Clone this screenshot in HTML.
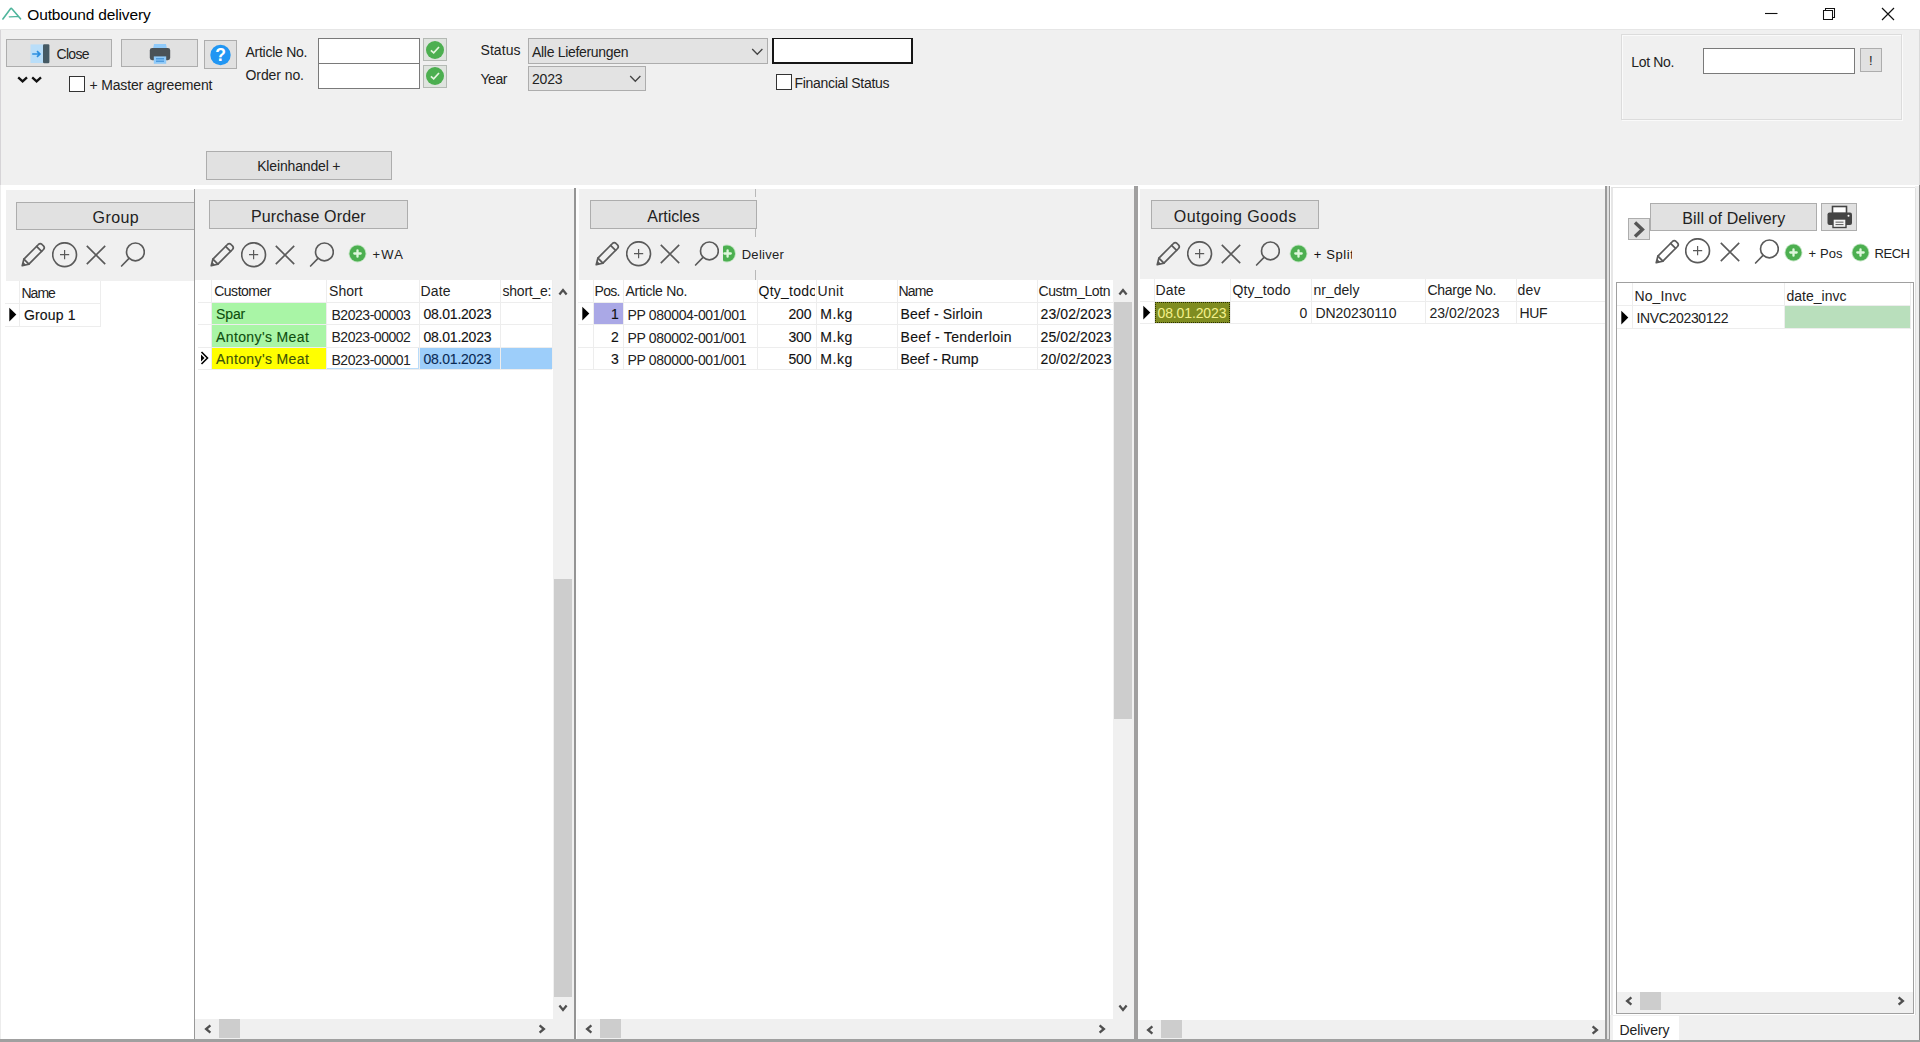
<!DOCTYPE html><html lang="en"><head><meta charset="utf-8"><title>Outbound delivery</title><style>
html,body{margin:0;padding:0;}
body{width:1920px;height:1042px;overflow:hidden;background:#f0f0f0;font-family:"Liberation Sans", sans-serif;position:relative;}
.w{position:absolute;left:0;top:0;width:1920px;height:1042px;overflow:hidden;}
.w div,.w svg,.w span{position:absolute;}
.w span{white-space:pre;line-height:20px;height:20px;}

</style></head><body><div class="w">
<div style="left:0px;top:0px;width:1920px;height:30px;background:#ffffff;"></div>
<div style="left:0px;top:29px;width:1920px;height:1px;background:#e6e6e6;"></div>
<svg style="left:2px;top:6px" width="21" height="16" viewBox="0 0 21 16"><path d="M0.9 13 L8.3 3 Q9.2 1.8 10.1 3 L18.5 12.8" fill="none" stroke="#4fb59c" stroke-width="1.6" stroke-linecap="round" stroke-linejoin="round"/><path d="M7.3 10.9 Q8.5 10.5 15.8 10.6" fill="none" stroke="#4fb59c" stroke-width="1.3" stroke-linecap="round"/></svg>
<svg style="left:1760px;top:4px" width="24" height="20" viewBox="0 0 24 20"><path d="M5 9.5 H17.5" stroke="#111" stroke-width="1.1"/></svg>
<svg style="left:1818px;top:4px" width="24" height="20" viewBox="0 0 24 20"><path d="M5.5 6.5 H14.5 V15.5 H5.5 Z M7.5 6.5 V4.5 H16.5 V13.5 H14.5" fill="none" stroke="#111" stroke-width="1.05"/></svg>
<svg style="left:1876px;top:4px" width="24" height="20" viewBox="0 0 24 20"><path d="M6 4 L18 16 M18 4 L6 16" stroke="#111" stroke-width="1.2"/></svg>
<div style="left:6px;top:39px;width:106px;height:28px;background:#e1e1e1;border:1px solid #adadad;box-sizing:border-box;"></div>
<svg style="left:29px;top:43px" width="24" height="22" viewBox="0 0 24 22"><rect x="1.5" y="1.4" width="13" height="18.6" fill="#b9def9"/><path d="M3.2 11 H10.6 M8 8.2 L10.9 11 L8 13.8" fill="none" stroke="#2b8fe0" stroke-width="1.7"/><rect x="14" y="1.2" width="6.4" height="19" rx="1.2" fill="#455a64"/></svg>
<div style="left:121px;top:39px;width:77px;height:28px;background:#e1e1e1;border:1px solid #adadad;box-sizing:border-box;"></div>
<svg style="left:148px;top:42px" width="24" height="24" viewBox="0 0 24 24"><path d="M6 2 H18 L19 7 H5 Z" fill="#90caf9"/><rect x="1.8" y="6" width="20.4" height="12.2" rx="2.4" fill="#4a5257"/><rect x="5.8" y="14.4" width="12.4" height="7.4" fill="#90caf9"/><rect x="8" y="16.2" width="8" height="1.2" fill="#3f8fd6"/><rect x="8" y="18.6" width="8" height="1.2" fill="#3f8fd6"/></svg>
<div style="left:204px;top:40px;width:33px;height:29px;background:#e1e1e1;border:1px solid #adadad;box-sizing:border-box;"></div>
<svg style="left:209.6px;top:44.1px" width="22" height="22" viewBox="0 0 22 22"><circle cx="10.5" cy="11" r="10.2" fill="#2196f3"/><text x="10.5" y="17" font-size="17.5" font-weight="bold" fill="#fff" text-anchor="middle" font-family="Liberation Sans, sans-serif">?</text></svg>
<svg style="left:16px;top:75px" width="28" height="10" viewBox="0 0 28 10"><path d="M2.2 2.4 L6.6 6.4 L11 2.4 M16.2 2.4 L20.6 6.4 L25 2.4" fill="none" stroke="#111" stroke-width="2.3" stroke-linejoin="miter"/></svg>
<div style="left:69px;top:76px;width:16px;height:16px;background:#fff;border:1px solid #333;box-sizing:border-box;"></div>
<div style="left:318px;top:38px;width:102px;height:26px;background:#fff;border:1px solid #7a7a7a;box-sizing:border-box;"></div>
<div style="left:318px;top:63px;width:102px;height:26px;background:#fff;border:1px solid #7a7a7a;box-sizing:border-box;"></div>
<div style="left:423px;top:38px;width:24px;height:23px;background:#dfe4df;border:1px solid #b4b9b4;box-sizing:border-box;"></div>
<svg style="left:425.0px;top:39.5px" width="20" height="20" viewBox="0 0 20 20"><circle cx="10" cy="10" r="9" fill="#4caf50"/><path d="M5.9 10.3 L8.7 12.9 L14 7" fill="none" stroke="#e4f5de" stroke-width="1.7"/></svg>
<div style="left:423px;top:64.5px;width:24px;height:23.0px;background:#dfe4df;border:1px solid #b4b9b4;box-sizing:border-box;"></div>
<svg style="left:425.0px;top:66.0px" width="20" height="20" viewBox="0 0 20 20"><circle cx="10" cy="10" r="9" fill="#4caf50"/><path d="M5.9 10.3 L8.7 12.9 L14 7" fill="none" stroke="#e4f5de" stroke-width="1.7"/></svg>
<div style="left:528px;top:38px;width:240px;height:26px;background:#e3e3e3;border:1px solid #adadad;box-sizing:border-box;"></div>
<svg style="left:750px;top:46px" width="16" height="12" viewBox="0 0 16 12"><path d="M2.2 3 L7.3 8.2 L12.4 3" fill="none" stroke="#444" stroke-width="1.3"/></svg>
<div style="left:528px;top:66px;width:118px;height:25px;background:#e3e3e3;border:1px solid #adadad;box-sizing:border-box;"></div>
<svg style="left:628px;top:73px" width="16" height="12" viewBox="0 0 16 12"><path d="M2.2 3 L7.3 8.2 L12.4 3" fill="none" stroke="#444" stroke-width="1.3"/></svg>
<div style="left:772.4px;top:37.8px;width:140.39999999999998px;height:26.0px;background:#161616;"></div>
<div style="left:774px;top:39.4px;width:137.20000000000005px;height:22.800000000000004px;background:#fff;"></div>
<div style="left:776px;top:74px;width:16px;height:16px;background:#fff;border:1px solid #333;box-sizing:border-box;"></div>
<div style="left:1621px;top:34px;width:281px;height:86px;border:1px solid #dcdcdc;box-sizing:border-box;box-shadow:1px 1px 0 #fafafa, inset 1px 1px 0 #fafafa;"></div>
<div style="left:1703px;top:48px;width:152px;height:26px;background:#fff;border:1px solid #7a7a7a;box-sizing:border-box;"></div>
<div style="left:1860px;top:48px;width:22px;height:23.599999999999994px;background:#e1e1e1;border:1px solid #adadad;box-sizing:border-box;"></div>
<div style="left:206px;top:151px;width:186px;height:29px;background:#e1e1e1;border:1px solid #adadad;box-sizing:border-box;"></div>
<div style="left:0px;top:185px;width:1920px;height:857px;background:#ffffff;"></div>
<div style="left:0px;top:185px;width:1px;height:857px;background:#ececec;"></div>
<div style="left:0px;top:30px;width:1px;height:155px;background:#d6d4d7;"></div>
<div style="left:1919px;top:30px;width:1px;height:155px;background:#dadada;"></div>
<div style="left:5.8px;top:190.3px;width:188.2px;height:90.69999999999999px;background:#f0f0f0;"></div>
<div style="left:16px;top:202px;width:178px;height:28px;background:#e1e1e1;border:1px solid #adadad;box-sizing:border-box;border-right:none;"></div>
<svg style="left:21px;top:242px" width="25" height="25" viewBox="0 0 25 25"><g transform="scale(1.04)"><g fill="none" stroke="#5a5a5a" stroke-width="1.65" stroke-linejoin="round" stroke-linecap="round"><path d="M1.2 22.8 L2.8 16.4 L16.8 2.4 Q18.5 0.8 20.2 2.4 L21.6 3.8 Q23.2 5.5 21.6 7.2 L7.6 21.2 Z"/><path d="M2.8 16.4 L7.6 21.2"/><path d="M15 4.2 L19.8 9"/></g><path d="M1.2 22.8 L2.1 19.2 L4.8 21.9 Z" fill="#5a5a5a"/></g></svg>
<svg style="left:51.5px;top:241.5px" width="26" height="26" viewBox="0 0 26 26"><g fill="none" stroke="#5a5a5a" stroke-width="1.65"><circle cx="12.6" cy="12.7" r="11.9"/><path d="M12.6 8.1 V17.3 M8 12.7 H17.2" stroke-width="1.2"/></g></svg>
<svg style="left:86px;top:245px" width="20" height="20" viewBox="0 0 20 20"><path d="M0.8 0.8 L19.2 19.2 M19.2 0.8 L0.8 19.2" stroke="#5a5a5a" stroke-width="1.65"/></svg>
<svg style="left:120px;top:242px" width="25" height="25" viewBox="0 0 25 25"><g fill="none" stroke="#5a5a5a" stroke-width="1.65" stroke-linecap="round"><circle cx="15.4" cy="9.9" r="8.9"/><path d="M9 16.4 L1.6 24"/></g></svg>
<div style="left:5px;top:303px;width:96px;height:1px;background:#ededed;"></div>
<div style="left:5px;top:326px;width:96px;height:1px;background:#ededed;"></div>
<div style="left:19.3px;top:281px;width:1.0px;height:45px;background:#ededed;"></div>
<div style="left:100px;top:281px;width:1px;height:45px;background:#ededed;"></div>
<svg style="left:8.7px;top:307.2px" width="10" height="16" viewBox="0 0 10 16"><path d="M0.3 0.8 L7.3 7.6 L0.3 14.4 Z" fill="#000"/></svg>
<div style="left:193.8px;top:188.7px;width:1.299999999999983px;height:850.3px;background:#989898;"></div>
<div style="left:195px;top:189.3px;width:379px;height:90.69999999999999px;background:#f0f0f0;"></div>
<div style="left:209px;top:200px;width:199px;height:29px;background:#e1e1e1;border:1px solid #adadad;box-sizing:border-box;"></div>
<svg style="left:210px;top:242px" width="25" height="25" viewBox="0 0 25 25"><g transform="scale(1.04)"><g fill="none" stroke="#5a5a5a" stroke-width="1.65" stroke-linejoin="round" stroke-linecap="round"><path d="M1.2 22.8 L2.8 16.4 L16.8 2.4 Q18.5 0.8 20.2 2.4 L21.6 3.8 Q23.2 5.5 21.6 7.2 L7.6 21.2 Z"/><path d="M2.8 16.4 L7.6 21.2"/><path d="M15 4.2 L19.8 9"/></g><path d="M1.2 22.8 L2.1 19.2 L4.8 21.9 Z" fill="#5a5a5a"/></g></svg>
<svg style="left:240.5px;top:241.5px" width="26" height="26" viewBox="0 0 26 26"><g fill="none" stroke="#5a5a5a" stroke-width="1.65"><circle cx="12.6" cy="12.7" r="11.9"/><path d="M12.6 8.1 V17.3 M8 12.7 H17.2" stroke-width="1.2"/></g></svg>
<svg style="left:275px;top:245px" width="20" height="20" viewBox="0 0 20 20"><path d="M0.8 0.8 L19.2 19.2 M19.2 0.8 L0.8 19.2" stroke="#5a5a5a" stroke-width="1.65"/></svg>
<svg style="left:309px;top:242px" width="25" height="25" viewBox="0 0 25 25"><g fill="none" stroke="#5a5a5a" stroke-width="1.65" stroke-linecap="round"><circle cx="15.4" cy="9.9" r="8.9"/><path d="M9 16.4 L1.6 24"/></g></svg>
<svg style="left:347.6px;top:244.3px" width="19" height="19" viewBox="0 0 19 19"><circle cx="9.5" cy="9.5" r="8.9" fill="#bfe3c0"/><circle cx="9.5" cy="9.5" r="8" fill="#4caf50"/><path d="M9.5 6.3 V12.7 M6.3 9.5 H12.7" stroke="#dff7dc" stroke-width="2.3" stroke-linecap="round"/></svg>
<div style="left:211px;top:302px;width:115px;height:22px;background:#a9f5a6;"></div>
<div style="left:211px;top:324px;width:115px;height:23px;background:#a9f5a6;"></div>
<div style="left:211px;top:347px;width:115px;height:22px;background:#ffff00;"></div>
<div style="left:419px;top:347px;width:133px;height:22px;background:#9dcefa;"></div>
<div style="left:326px;top:347px;width:93px;height:22px;border:1px solid #b9dcfa;box-sizing:border-box;"></div>
<div style="left:198px;top:302px;width:354px;height:1px;background:#ededed;"></div>
<div style="left:198px;top:324px;width:354px;height:1px;background:#ededed;"></div>
<div style="left:198px;top:347px;width:354px;height:1px;background:#ededed;"></div>
<div style="left:198px;top:369px;width:354px;height:1px;background:#ededed;"></div>
<div style="left:211px;top:280px;width:1px;height:89px;background:#ededed;"></div>
<div style="left:326px;top:280px;width:1px;height:89px;background:#ededed;"></div>
<div style="left:419px;top:280px;width:1px;height:89px;background:#ededed;"></div>
<div style="left:500px;top:280px;width:1px;height:89px;background:#ededed;"></div>
<div style="left:552px;top:280px;width:1px;height:89px;background:#ededed;"></div>
<svg style="left:199px;top:350px" width="12" height="16" viewBox="0 0 12 16"><path d="M2.5 2 L8.5 8 L2.5 14" fill="none" stroke="#000" stroke-width="1.6"/><path d="M2 4.5 L5.5 8 L2 11.5 Z" fill="#000"/></svg>
<div style="left:553px;top:280px;width:20.5px;height:759px;background:#f0f0f0;"></div>
<div style="left:554px;top:579px;width:18px;height:418px;background:#cdcdcd;"></div>
<svg style="left:555px;top:283.5px" width="16" height="16" viewBox="-8 -8 16 16"><path d="M-3.6 2.4 L0 -1.9 L3.6 2.4" fill="none" stroke="#505050" stroke-width="2.3"/></svg>
<svg style="left:555px;top:999.5px" width="16" height="16" viewBox="-8 -8 16 16"><path d="M-3.6 -2.4 L0 1.9 L3.6 -2.4" fill="none" stroke="#505050" stroke-width="2.3"/></svg>
<div style="left:195px;top:1019px;width:358px;height:20px;background:#f0f0f0;"></div>
<div style="left:218.8px;top:1019.2px;width:21.19999999999999px;height:18.799999999999955px;background:#cdcdcd;"></div>
<svg style="left:199.5px;top:1020.5999999999999px" width="16" height="16" viewBox="-8 -8 16 16"><path d="M2.4 -3.6 L-1.9 0 L2.4 3.6" fill="none" stroke="#505050" stroke-width="2.3"/></svg>
<svg style="left:534px;top:1020.5999999999999px" width="16" height="16" viewBox="-8 -8 16 16"><path d="M-2.4 -3.6 L1.9 0 L-2.4 3.6" fill="none" stroke="#505050" stroke-width="2.3"/></svg>
<div style="left:576px;top:187.5px;width:3.2999999999999545px;height:851.5px;background:#fdfdfd;"></div>
<div style="left:573.5px;top:187.5px;width:2.5px;height:851.5px;background:#949494;"></div>
<div style="left:579.3px;top:188.8px;width:554.7px;height:91.19999999999999px;background:#f0f0f0;"></div>
<div style="left:590px;top:200px;width:167px;height:29px;background:#e1e1e1;border:1px solid #adadad;box-sizing:border-box;"></div>
<div style="left:755px;top:189px;width:1px;height:8px;background:#b8b8b8;"></div>
<div style="left:755px;top:229px;width:1px;height:8px;background:#b8b8b8;"></div>
<div style="left:755px;top:270px;width:1px;height:10px;background:#b8b8b8;"></div>
<svg style="left:595.2px;top:241px" width="25" height="25" viewBox="0 0 25 25"><g transform="scale(1.04)"><g fill="none" stroke="#5a5a5a" stroke-width="1.65" stroke-linejoin="round" stroke-linecap="round"><path d="M1.2 22.8 L2.8 16.4 L16.8 2.4 Q18.5 0.8 20.2 2.4 L21.6 3.8 Q23.2 5.5 21.6 7.2 L7.6 21.2 Z"/><path d="M2.8 16.4 L7.6 21.2"/><path d="M15 4.2 L19.8 9"/></g><path d="M1.2 22.8 L2.1 19.2 L4.8 21.9 Z" fill="#5a5a5a"/></g></svg>
<svg style="left:625.7px;top:240.5px" width="26" height="26" viewBox="0 0 26 26"><g fill="none" stroke="#5a5a5a" stroke-width="1.65"><circle cx="12.6" cy="12.7" r="11.9"/><path d="M12.6 8.1 V17.3 M8 12.7 H17.2" stroke-width="1.2"/></g></svg>
<svg style="left:660.2px;top:244px" width="20" height="20" viewBox="0 0 20 20"><path d="M0.8 0.8 L19.2 19.2 M19.2 0.8 L0.8 19.2" stroke="#5a5a5a" stroke-width="1.65"/></svg>
<svg style="left:694.2px;top:241px" width="25" height="25" viewBox="0 0 25 25"><g fill="none" stroke="#5a5a5a" stroke-width="1.65" stroke-linecap="round"><circle cx="15.4" cy="9.9" r="8.9"/><path d="M9 16.4 L1.6 24"/></g></svg>
<svg style="left:722.5px;top:244px" width="14" height="19" viewBox="0 0 14 19"><circle cx="4" cy="9.5" r="8.9" fill="#bfe3c0"/><circle cx="4" cy="9.5" r="8" fill="#4caf50"/><path d="M4.6 6.3 V12.7 M1.4 9.5 H7.8" stroke="#dff7dc" stroke-width="2.3" stroke-linecap="round"/></svg>
<div style="left:593px;top:302px;width:30px;height:22px;background:#aaa8e6;"></div>
<div style="left:578px;top:302px;width:535px;height:1px;background:#ededed;"></div>
<div style="left:578px;top:324px;width:535px;height:1px;background:#ededed;"></div>
<div style="left:578px;top:347px;width:535px;height:1px;background:#ededed;"></div>
<div style="left:578px;top:369px;width:535px;height:1px;background:#ededed;"></div>
<div style="left:593px;top:280px;width:1px;height:89px;background:#ededed;"></div>
<div style="left:623px;top:280px;width:1px;height:89px;background:#ededed;"></div>
<div style="left:757px;top:280px;width:1px;height:89px;background:#ededed;"></div>
<div style="left:816px;top:280px;width:1px;height:89px;background:#ededed;"></div>
<div style="left:897px;top:280px;width:1px;height:89px;background:#ededed;"></div>
<div style="left:1037px;top:280px;width:1px;height:89px;background:#ededed;"></div>
<div style="left:1113px;top:280px;width:1px;height:89px;background:#ededed;"></div>
<svg style="left:582px;top:306px" width="10" height="16" viewBox="0 0 10 16"><path d="M0.3 0.8 L7.3 7.6 L0.3 14.4 Z" fill="#000"/></svg>
<div style="left:1113px;top:280px;width:20.700000000000045px;height:759px;background:#f0f0f0;"></div>
<div style="left:1114px;top:302px;width:18px;height:417px;background:#cdcdcd;"></div>
<svg style="left:1115px;top:283.5px" width="16" height="16" viewBox="-8 -8 16 16"><path d="M-3.6 2.4 L0 -1.9 L3.6 2.4" fill="none" stroke="#505050" stroke-width="2.3"/></svg>
<svg style="left:1115px;top:999.5px" width="16" height="16" viewBox="-8 -8 16 16"><path d="M-3.6 -2.4 L0 1.9 L3.6 -2.4" fill="none" stroke="#505050" stroke-width="2.3"/></svg>
<div style="left:577px;top:1019px;width:536px;height:20px;background:#f0f0f0;"></div>
<div style="left:599.8px;top:1019.2px;width:21.200000000000045px;height:18.799999999999955px;background:#cdcdcd;"></div>
<svg style="left:581px;top:1020.5999999999999px" width="16" height="16" viewBox="-8 -8 16 16"><path d="M2.4 -3.6 L-1.9 0 L2.4 3.6" fill="none" stroke="#505050" stroke-width="2.3"/></svg>
<svg style="left:1094px;top:1020.5999999999999px" width="16" height="16" viewBox="-8 -8 16 16"><path d="M-2.4 -3.6 L1.9 0 L-2.4 3.6" fill="none" stroke="#505050" stroke-width="2.3"/></svg>
<div style="left:1137.5px;top:186.4px;width:2.7000000000000455px;height:852.6px;background:#fdfdfd;"></div>
<div style="left:1133.7px;top:186.4px;width:3.8999999999998636px;height:852.6px;background:#a09f9f;"></div>
<div style="left:1140.2px;top:188.5px;width:464.79999999999995px;height:90.5px;background:#f0f0f0;"></div>
<div style="left:1151px;top:200px;width:168px;height:29px;background:#e1e1e1;border:1px solid #adadad;box-sizing:border-box;"></div>
<svg style="left:1156.1px;top:241px" width="25" height="25" viewBox="0 0 25 25"><g transform="scale(1.04)"><g fill="none" stroke="#5a5a5a" stroke-width="1.65" stroke-linejoin="round" stroke-linecap="round"><path d="M1.2 22.8 L2.8 16.4 L16.8 2.4 Q18.5 0.8 20.2 2.4 L21.6 3.8 Q23.2 5.5 21.6 7.2 L7.6 21.2 Z"/><path d="M2.8 16.4 L7.6 21.2"/><path d="M15 4.2 L19.8 9"/></g><path d="M1.2 22.8 L2.1 19.2 L4.8 21.9 Z" fill="#5a5a5a"/></g></svg>
<svg style="left:1186.6px;top:240.5px" width="26" height="26" viewBox="0 0 26 26"><g fill="none" stroke="#5a5a5a" stroke-width="1.65"><circle cx="12.6" cy="12.7" r="11.9"/><path d="M12.6 8.1 V17.3 M8 12.7 H17.2" stroke-width="1.2"/></g></svg>
<svg style="left:1221.1px;top:244px" width="20" height="20" viewBox="0 0 20 20"><path d="M0.8 0.8 L19.2 19.2 M19.2 0.8 L0.8 19.2" stroke="#5a5a5a" stroke-width="1.65"/></svg>
<svg style="left:1255.1px;top:241px" width="25" height="25" viewBox="0 0 25 25"><g fill="none" stroke="#5a5a5a" stroke-width="1.65" stroke-linecap="round"><circle cx="15.4" cy="9.9" r="8.9"/><path d="M9 16.4 L1.6 24"/></g></svg>
<svg style="left:1288.7px;top:244.1px" width="19" height="19" viewBox="0 0 19 19"><circle cx="9.5" cy="9.5" r="8.9" fill="#bfe3c0"/><circle cx="9.5" cy="9.5" r="8" fill="#4caf50"/><path d="M9.5 6.3 V12.7 M6.3 9.5 H12.7" stroke="#dff7dc" stroke-width="2.3" stroke-linecap="round"/></svg>
<div style="left:1140px;top:301px;width:465px;height:1px;background:#ededed;"></div>
<div style="left:1140px;top:323px;width:465px;height:1px;background:#ededed;"></div>
<div style="left:1154px;top:279px;width:1px;height:44px;background:#ededed;"></div>
<div style="left:1230px;top:279px;width:1px;height:44px;background:#ededed;"></div>
<div style="left:1311px;top:279px;width:1px;height:44px;background:#ededed;"></div>
<div style="left:1425px;top:279px;width:1px;height:44px;background:#ededed;"></div>
<div style="left:1516px;top:279px;width:1px;height:44px;background:#ededed;"></div>
<div style="left:1155px;top:302px;width:75px;height:21px;background:#7f8c20;border:1px dotted #2a2f00;box-sizing:border-box;"></div>
<svg style="left:1143px;top:305px" width="10" height="16" viewBox="0 0 10 16"><path d="M0.3 0.8 L7.3 7.6 L0.3 14.4 Z" fill="#000"/></svg>
<div style="left:1138px;top:1019.5px;width:467px;height:19.5px;background:#f0f0f0;"></div>
<div style="left:1161.3px;top:1019.7px;width:21.200000000000045px;height:18.700000000000045px;background:#cdcdcd;"></div>
<svg style="left:1142px;top:1021.5px" width="16" height="16" viewBox="-8 -8 16 16"><path d="M2.4 -3.6 L-1.9 0 L2.4 3.6" fill="none" stroke="#505050" stroke-width="2.3"/></svg>
<svg style="left:1587px;top:1021.5px" width="16" height="16" viewBox="-8 -8 16 16"><path d="M-2.4 -3.6 L1.9 0 L-2.4 3.6" fill="none" stroke="#505050" stroke-width="2.3"/></svg>
<div style="left:1604.8px;top:186px;width:5.2000000000000455px;height:853px;background:#e0e0e0;"></div>
<div style="left:1604.8px;top:186px;width:2.5px;height:853px;background:#9a9a9a;"></div>
<div style="left:1608.7px;top:186px;width:1.2999999999999545px;height:853px;background:#9a9a9a;"></div>
<div style="left:1610px;top:186.7px;width:306px;height:853.3px;background:#fff;"></div>
<div style="left:1611px;top:186.7px;width:2px;height:853.3px;background:#e6e6e6;"></div>
<div style="left:1611px;top:186.7px;width:305px;height:1.3000000000000114px;background:#e2e2e2;"></div>
<div style="left:1915.2px;top:186px;width:4.7999999999999545px;height:856px;background:#f0f0f0;"></div>
<div style="left:1915.2px;top:188px;width:1.2999999999999545px;height:852px;background:#e0e0e0;"></div>
<div style="left:1918.9px;top:185px;width:1.099999999999909px;height:857px;background:#8a8a8a;"></div>
<div style="left:1628px;top:218px;width:22px;height:22px;background:#e1e1e1;border:1px solid #adadad;box-sizing:border-box;"></div>
<svg style="left:1630px;top:220px" width="18" height="18" viewBox="0 0 18 18"><path d="M5 2.4 L12.4 9.4 L5 16.4" fill="none" stroke="#555" stroke-width="3.4"/></svg>
<div style="left:1650px;top:203.2px;width:167px;height:28.200000000000017px;background:#e1e1e1;border:1px solid #adadad;box-sizing:border-box;"></div>
<div style="left:1821px;top:203.2px;width:36px;height:28.200000000000017px;background:#e1e1e1;border:1px solid #adadad;box-sizing:border-box;"></div>
<svg style="left:1826px;top:204px" width="28" height="26" viewBox="0 0 28 26"><rect x="6.5" y="2.5" width="14" height="7" fill="#fff" stroke="#444" stroke-width="1.6"/><rect x="1.5" y="8.5" width="24.5" height="12.5" rx="2" fill="#454545"/><rect x="7" y="15" width="13" height="8.5" fill="#f4f4f4" stroke="#444" stroke-width="1.4"/><rect x="9.5" y="17.6" width="8" height="1.1" fill="#666"/><rect x="9.5" y="20" width="8" height="1.1" fill="#666"/><circle cx="22.5" cy="11.8" r="1" fill="#fff"/></svg>
<svg style="left:1654.6px;top:238.8px" width="25" height="25" viewBox="0 0 25 25"><g transform="scale(1.04)"><g fill="none" stroke="#5a5a5a" stroke-width="1.65" stroke-linejoin="round" stroke-linecap="round"><path d="M1.2 22.8 L2.8 16.4 L16.8 2.4 Q18.5 0.8 20.2 2.4 L21.6 3.8 Q23.2 5.5 21.6 7.2 L7.6 21.2 Z"/><path d="M2.8 16.4 L7.6 21.2"/><path d="M15 4.2 L19.8 9"/></g><path d="M1.2 22.8 L2.1 19.2 L4.8 21.9 Z" fill="#5a5a5a"/></g></svg>
<svg style="left:1685.1px;top:238.3px" width="26" height="26" viewBox="0 0 26 26"><g fill="none" stroke="#5a5a5a" stroke-width="1.65"><circle cx="12.6" cy="12.7" r="11.9"/><path d="M12.6 8.1 V17.3 M8 12.7 H17.2" stroke-width="1.2"/></g></svg>
<svg style="left:1719.6px;top:241.8px" width="20" height="20" viewBox="0 0 20 20"><path d="M0.8 0.8 L19.2 19.2 M19.2 0.8 L0.8 19.2" stroke="#5a5a5a" stroke-width="1.65"/></svg>
<svg style="left:1753.6px;top:238.8px" width="25" height="25" viewBox="0 0 25 25"><g fill="none" stroke="#5a5a5a" stroke-width="1.65" stroke-linecap="round"><circle cx="15.4" cy="9.9" r="8.9"/><path d="M9 16.4 L1.6 24"/></g></svg>
<svg style="left:1784px;top:243px" width="19" height="19" viewBox="0 0 19 19"><circle cx="9.5" cy="9.5" r="8.9" fill="#bfe3c0"/><circle cx="9.5" cy="9.5" r="8" fill="#4caf50"/><path d="M9.5 6.3 V12.7 M6.3 9.5 H12.7" stroke="#dff7dc" stroke-width="2.3" stroke-linecap="round"/></svg>
<svg style="left:1851.4px;top:243px" width="19" height="19" viewBox="0 0 19 19"><circle cx="9.5" cy="9.5" r="8.9" fill="#bfe3c0"/><circle cx="9.5" cy="9.5" r="8" fill="#4caf50"/><path d="M9.5 6.3 V12.7 M6.3 9.5 H12.7" stroke="#dff7dc" stroke-width="2.3" stroke-linecap="round"/></svg>
<div style="left:1616px;top:282px;width:298px;height:732px;background:#fff;border:1px solid #a0a0a0;box-sizing:border-box;"></div>
<div style="left:1785px;top:306px;width:126px;height:22px;background:#b9dfbc;"></div>
<div style="left:1617px;top:305px;width:294px;height:1px;background:#ededed;"></div>
<div style="left:1617px;top:328px;width:294px;height:1px;background:#ededed;"></div>
<div style="left:1632px;top:283px;width:1px;height:45px;background:#ededed;"></div>
<div style="left:1784px;top:283px;width:1px;height:45px;background:#ededed;"></div>
<div style="left:1910px;top:283px;width:1px;height:45px;background:#ededed;"></div>
<svg style="left:1621px;top:310px" width="10" height="16" viewBox="0 0 10 16"><path d="M0.3 0.8 L7.3 7.6 L0.3 14.4 Z" fill="#000"/></svg>
<div style="left:1617px;top:992px;width:296px;height:21px;background:#f0f0f0;"></div>
<div style="left:1640.2px;top:992px;width:21.0px;height:18px;background:#cdcdcd;"></div>
<svg style="left:1620.8px;top:993.3px" width="16" height="16" viewBox="-8 -8 16 16"><path d="M2.4 -3.6 L-1.9 0 L2.4 3.6" fill="none" stroke="#505050" stroke-width="2.3"/></svg>
<svg style="left:1893.4px;top:993.3px" width="16" height="16" viewBox="-8 -8 16 16"><path d="M-2.4 -3.6 L1.9 0 L-2.4 3.6" fill="none" stroke="#505050" stroke-width="2.3"/></svg>
<div style="left:1610px;top:1015px;width:306px;height:25px;background:#f0f0f0;"></div>
<div style="left:1612.6px;top:1015.6px;width:66.80000000000018px;height:24.600000000000023px;background:#e4e4e4;"></div>
<div style="left:1613.4px;top:1015.6px;width:65.19999999999982px;height:24.600000000000023px;background:#fff;"></div>
<div style="left:0px;top:1038.6px;width:1610px;height:3.400000000000091px;background:#a0a0a0;"></div>
<div style="left:1610px;top:1040.2px;width:310px;height:1.7999999999999545px;background:#a0a0a0;"></div>
<span style="left:27.3px;top:5.00px;font-size:15.5px;color:#000;letter-spacing:-0.15px;">Outbound delivery</span>
<span style="left:56.5px;top:44.00px;font-size:14px;color:#222;letter-spacing:-0.70px;">Close</span>
<span style="left:89.5px;top:75.00px;font-size:14px;color:#222;letter-spacing:-0.16px;">+ Master agreement</span>
<span style="left:245.5px;top:42.00px;font-size:14px;color:#222;letter-spacing:-0.26px;">Article No.</span>
<span style="left:245.5px;top:65.00px;font-size:14px;color:#222;letter-spacing:-0.08px;">Order no.</span>
<span style="left:480.5px;top:40.00px;font-size:14px;color:#222;letter-spacing:0.06px;">Status</span>
<span style="left:480.5px;top:69.00px;font-size:14px;color:#222;letter-spacing:-0.43px;">Year</span>
<span style="left:532.0px;top:42.00px;font-size:14px;color:#222;letter-spacing:-0.31px;">Alle Lieferungen</span>
<span style="left:532.0px;top:69.00px;font-size:14px;color:#222;letter-spacing:-0.22px;">2023</span>
<span style="left:794.5px;top:73.00px;font-size:14px;color:#222;letter-spacing:-0.31px;">Financial Status</span>
<span style="left:1631.2px;top:52.00px;font-size:14px;color:#222;letter-spacing:-0.31px;">Lot No.</span>
<span style="left:1869.0px;top:51.00px;font-size:13px;color:#222;">!</span>
<span style="left:257.2px;top:156.00px;font-size:14px;color:#222;letter-spacing:-0.16px;">Kleinhandel +</span>
<span style="left:92.5px;top:208.00px;font-size:16px;color:#222;letter-spacing:0.43px;">Group</span>
<span style="left:21.5px;top:283.00px;font-size:14px;color:#222;letter-spacing:-1.00px;">Name</span>
<span style="left:24.0px;top:305.00px;font-size:14px;color:#111;letter-spacing:0.15px;-webkit-text-stroke:0.12px;">Group 1</span>
<span style="left:250.9px;top:207.00px;font-size:16px;color:#222;letter-spacing:0.13px;">Purchase Order</span>
<span style="left:372.5px;top:245.00px;font-size:13px;color:#222;letter-spacing:1.17px;">+WA</span>
<span style="left:214.2px;top:281.00px;font-size:14px;color:#222;letter-spacing:-0.48px;">Customer</span>
<span style="left:329.0px;top:281.00px;font-size:14px;color:#222;letter-spacing:0.06px;">Short</span>
<span style="left:420.5px;top:281.00px;font-size:14px;color:#222;letter-spacing:0.14px;">Date</span>
<span style="left:502.5px;top:281.00px;font-size:14px;color:#222;letter-spacing:-0.23px;">short_e:</span>
<span style="left:216.1px;top:304.00px;font-size:14px;color:#0e4e0e;letter-spacing:-0.13px;-webkit-text-stroke:0.12px;">Spar</span>
<span style="left:331.5px;top:305.00px;font-size:14px;color:#222;letter-spacing:-0.47px;">B2023-00003</span>
<span style="left:423.5px;top:304.00px;font-size:14px;color:#111;letter-spacing:-0.23px;-webkit-text-stroke:0.12px;">08.01.2023</span>
<span style="left:216.1px;top:327.00px;font-size:14px;color:#0e4e0e;letter-spacing:0.37px;-webkit-text-stroke:0.12px;">Antony's Meat</span>
<span style="left:331.5px;top:327.00px;font-size:14px;color:#222;letter-spacing:-0.47px;">B2023-00002</span>
<span style="left:423.5px;top:327.00px;font-size:14px;color:#111;letter-spacing:-0.23px;-webkit-text-stroke:0.12px;">08.01.2023</span>
<span style="left:216.1px;top:349.00px;font-size:14px;color:#3c5208;letter-spacing:0.37px;-webkit-text-stroke:0.12px;">Antony's Meat</span>
<span style="left:331.5px;top:350.00px;font-size:14px;color:#222;letter-spacing:-0.47px;">B2023-00001</span>
<span style="left:423.5px;top:349.00px;font-size:14px;color:#0a2a55;letter-spacing:-0.23px;-webkit-text-stroke:0.12px;">08.01.2023</span>
<span style="left:647.2px;top:207.00px;font-size:16px;color:#222;letter-spacing:0.02px;">Articles</span>
<span style="left:741.7px;top:245.00px;font-size:13px;color:#222;letter-spacing:0.29px;">Deliver</span>
<span style="left:594.5px;top:281.00px;font-size:14px;color:#222;letter-spacing:-0.67px;">Pos.</span>
<span style="left:625.5px;top:281.00px;font-size:14px;color:#222;letter-spacing:-0.26px;">Article No.</span>
<div style="left:756.0px;top:276px;width:59.0px;height:28px;overflow:hidden"><span style="left:2.5px;top:5.00px;font-size:14px;color:#111;letter-spacing:0.24px;">Qty_todo</span></div>
<span style="left:817.5px;top:281.00px;font-size:14px;color:#222;letter-spacing:0.36px;">Unit</span>
<span style="left:898.5px;top:281.00px;font-size:14px;color:#222;letter-spacing:-0.79px;">Name</span>
<span style="left:1038.5px;top:281.00px;font-size:14px;color:#222;letter-spacing:-0.39px;">Custm_Lotn</span>
<span style="left:611.0px;top:304.00px;font-size:14px;color:#111;-webkit-text-stroke:0.12px;">1</span>
<span style="left:627.5px;top:305.00px;font-size:14px;color:#222;letter-spacing:-0.33px;">PP 080004-001/001</span>
<span style="left:788.5px;top:304.00px;font-size:14px;color:#111;letter-spacing:-0.18px;-webkit-text-stroke:0.12px;">200</span>
<span style="left:820.3px;top:304.00px;font-size:14px;color:#111;letter-spacing:0.52px;-webkit-text-stroke:0.12px;">M.kg</span>
<span style="left:900.5px;top:304.00px;font-size:14px;color:#111;letter-spacing:0.14px;-webkit-text-stroke:0.12px;">Beef - Sirloin</span>
<span style="left:1040.5px;top:304.00px;font-size:14px;color:#111;letter-spacing:0.10px;-webkit-text-stroke:0.12px;">23/02/2023</span>
<span style="left:611.0px;top:327.00px;font-size:14px;color:#111;-webkit-text-stroke:0.12px;">2</span>
<span style="left:627.5px;top:328.00px;font-size:14px;color:#222;letter-spacing:-0.33px;">PP 080002-001/001</span>
<span style="left:788.5px;top:327.00px;font-size:14px;color:#111;letter-spacing:-0.18px;-webkit-text-stroke:0.12px;">300</span>
<span style="left:820.3px;top:327.00px;font-size:14px;color:#111;letter-spacing:0.52px;-webkit-text-stroke:0.12px;">M.kg</span>
<span style="left:900.5px;top:327.00px;font-size:14px;color:#111;letter-spacing:0.34px;-webkit-text-stroke:0.12px;">Beef - Tenderloin</span>
<span style="left:1040.5px;top:327.00px;font-size:14px;color:#111;letter-spacing:0.10px;-webkit-text-stroke:0.12px;">25/02/2023</span>
<span style="left:611.0px;top:349.00px;font-size:14px;color:#111;-webkit-text-stroke:0.12px;">3</span>
<span style="left:627.5px;top:350.00px;font-size:14px;color:#222;letter-spacing:-0.33px;">PP 080000-001/001</span>
<span style="left:788.5px;top:349.00px;font-size:14px;color:#111;letter-spacing:-0.18px;-webkit-text-stroke:0.12px;">500</span>
<span style="left:820.3px;top:349.00px;font-size:14px;color:#111;letter-spacing:0.52px;-webkit-text-stroke:0.12px;">M.kg</span>
<span style="left:900.5px;top:349.00px;font-size:14px;color:#111;letter-spacing:-0.06px;-webkit-text-stroke:0.12px;">Beef - Rump</span>
<span style="left:1040.5px;top:349.00px;font-size:14px;color:#111;letter-spacing:0.10px;-webkit-text-stroke:0.12px;">20/02/2023</span>
<span style="left:1173.8px;top:207.00px;font-size:16px;color:#222;letter-spacing:0.45px;">Outgoing Goods</span>
<div style="left:1311.2px;top:239px;width:40.4px;height:28px;overflow:hidden"><span style="left:2.5px;top:6.00px;font-size:13px;color:#111;letter-spacing:0.63px;">+ Split</span></div>
<span style="left:1155.5px;top:280.00px;font-size:14px;color:#222;letter-spacing:0.14px;">Date</span>
<span style="left:1232.5px;top:280.00px;font-size:14px;color:#222;letter-spacing:0.17px;">Qty_todo</span>
<span style="left:1313.5px;top:280.00px;font-size:14px;color:#222;letter-spacing:0.01px;">nr_dely</span>
<span style="left:1427.5px;top:280.00px;font-size:14px;color:#222;letter-spacing:-0.29px;">Charge No.</span>
<span style="left:1517.5px;top:280.00px;font-size:14px;color:#222;letter-spacing:0.21px;">dev</span>
<span style="left:1157.5px;top:303.00px;font-size:14px;color:#f3f08a;letter-spacing:-0.12px;">08.01.2023</span>
<span style="left:1299.5px;top:303.00px;font-size:14px;color:#222;">0</span>
<span style="left:1315.5px;top:303.00px;font-size:14px;color:#222;letter-spacing:-0.05px;">DN20230110</span>
<span style="left:1429.5px;top:303.00px;font-size:14px;color:#222;letter-spacing:-0.01px;">23/02/2023</span>
<span style="left:1519.5px;top:303.00px;font-size:14px;color:#222;letter-spacing:-0.39px;">HUF</span>
<span style="left:1682.3px;top:209.00px;font-size:16px;color:#222;letter-spacing:0.10px;">Bill of Delivery</span>
<span style="left:1808.5px;top:244.00px;font-size:13px;color:#222;letter-spacing:0.10px;">+ Pos</span>
<span style="left:1874.5px;top:244.00px;font-size:13px;color:#222;letter-spacing:-0.45px;">RECH</span>
<span style="left:1634.5px;top:286.00px;font-size:14px;color:#222;letter-spacing:0.11px;">No_Invc</span>
<span style="left:1786.5px;top:286.00px;font-size:14px;color:#222;letter-spacing:0.01px;">date_invc</span>
<span style="left:1636.5px;top:308.00px;font-size:14px;color:#222;letter-spacing:-0.34px;">INVC20230122</span>
<span style="left:1619.5px;top:1020.00px;font-size:14px;color:#222;letter-spacing:-0.08px;">Delivery</span>
</div></body></html>
